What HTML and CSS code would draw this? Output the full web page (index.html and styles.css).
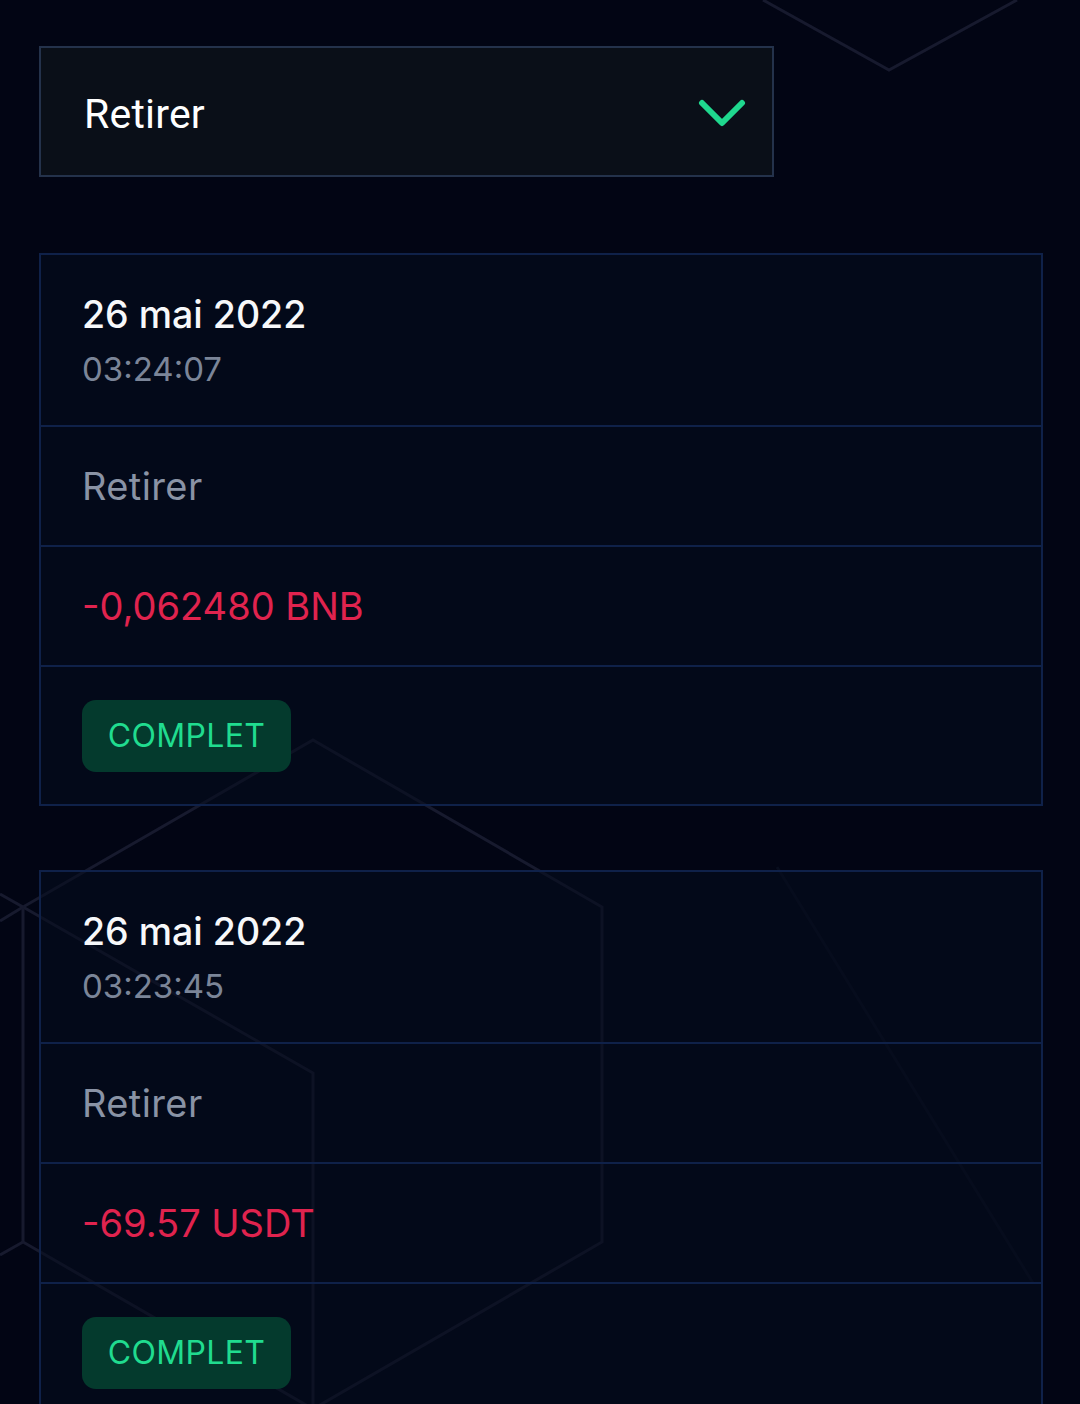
FILE: index.html
```html
<!DOCTYPE html>
<html lang="fr">
<head>
<meta charset="utf-8">
<title>Retirer</title>
<link rel="stylesheet" href="styles.css">
</head>
<body>
<svg class="bg" width="1080" height="1404" viewBox="0 0 1080 1404" aria-hidden="true">
  <g fill="none" stroke="#171a2e" stroke-width="3">
    <polyline points="763,0 889,70 1017,0"/>
    <polygon points="313,740 602,907 602,1242 313,1409 23,1242 23,907"/>
    <polyline points="23,907 313,1073 313,1409"/>
    <line x1="0" y1="921" x2="23" y2="907"/>
    <line x1="0" y1="894" x2="23" y2="907"/>
    <line x1="0" y1="1255" x2="23" y2="1242"/>
  </g>
  <line x1="777" y1="867" x2="1033" y2="1283" stroke="#080d1d" stroke-width="3"/>
</svg>

<main class="page">
  <div class="select">
    <span class="select-label">Retirer</span>
    <svg class="chevron" width="50" height="32" viewBox="0 0 50 32">
      <polyline points="4,5 24,25 44,5" fill="none" stroke="#1fd88e" stroke-width="6" stroke-linecap="round" stroke-linejoin="round"/>
    </svg>
  </div>

  <section class="card">
    <div class="row row-date">
      <div class="date">26 mai 2022</div>
      <div class="time">03:24:07</div>
    </div>
    <div class="row row-mid"><span class="type">Retirer</span></div>
    <div class="row row-mid"><span class="amount">-0,062480 BNB</span></div>
    <div class="row row-status"><span class="badge">COMPLET</span></div>
  </section>

  <section class="card">
    <div class="row row-date">
      <div class="date">26 mai 2022</div>
      <div class="time">03:23:45</div>
    </div>
    <div class="row row-mid"><span class="type">Retirer</span></div>
    <div class="row row-mid"><span class="amount">-69.57 USDT</span></div>
    <div class="row row-status"><span class="badge">COMPLET</span></div>
  </section>
</main>
</body>
</html>
```
FILE: styles.css
```css
* { box-sizing: border-box; }

html, body {
  margin: 0;
  padding: 0;
}

body {
  background: #020514;
  font-family: Inter, "Noto Sans", sans-serif;
  position: relative;
  height: 1404px;
  overflow: hidden;
}

.bg {
  position: absolute;
  left: 0;
  top: 0;
  z-index: 0;
}

.page {
  position: relative;
  z-index: 1;
  padding: 46px 37px 0 39px;
  display: flex;
  flex-direction: column;
}

.select {
  width: 735px;
  height: 131px;
  background: #0a0f18;
  border: 2px solid #24324b;
  display: flex;
  align-items: center;
  justify-content: space-between;
  padding: 4px 24px 0 43px;
  margin-bottom: 76px;
}

.select-label {
  font-family: Roboto, "Liberation Sans", sans-serif;
  font-size: 41px;
  color: #ffffff;
  letter-spacing: 0.2px;
}

.chevron {
  display: block;
}

.card {
  width: 1004px;
  border: 2px solid #0f2149;
  background: rgba(6, 12, 30, 0.55);
  margin-bottom: 64px;
}

.row {
  border-bottom: 2px solid #0f2149;
  padding-left: 41px;
  display: flex;
  flex-direction: column;
  justify-content: center;
}

.row:last-child { border-bottom: none; }

.row-date { height: 172px; padding-top: 2px; }
.row-mid { height: 120px; }
.row-status { height: 137px; align-items: flex-start; }

.date {
  font-size: 37.5px;
  font-weight: 500;
  color: #f7f8fa;
  line-height: 46px;
}

.time {
  font-size: 33px;
  color: #7b8598;
  line-height: 44px;
  margin-top: 9px;
}

.type {
  font-size: 38px;
  color: #8a93a5;
  letter-spacing: 0.4px;
}

.amount {
  font-size: 38px;
  color: #e0234e;
}

.badge {
  display: inline-flex;
  align-items: center;
  justify-content: center;
  width: 209px;
  height: 72px;
  background: #043a2d;
  border-radius: 14px;
  color: #20dc8f;
  font-size: 32px;
  letter-spacing: 0.3px;
}
```
